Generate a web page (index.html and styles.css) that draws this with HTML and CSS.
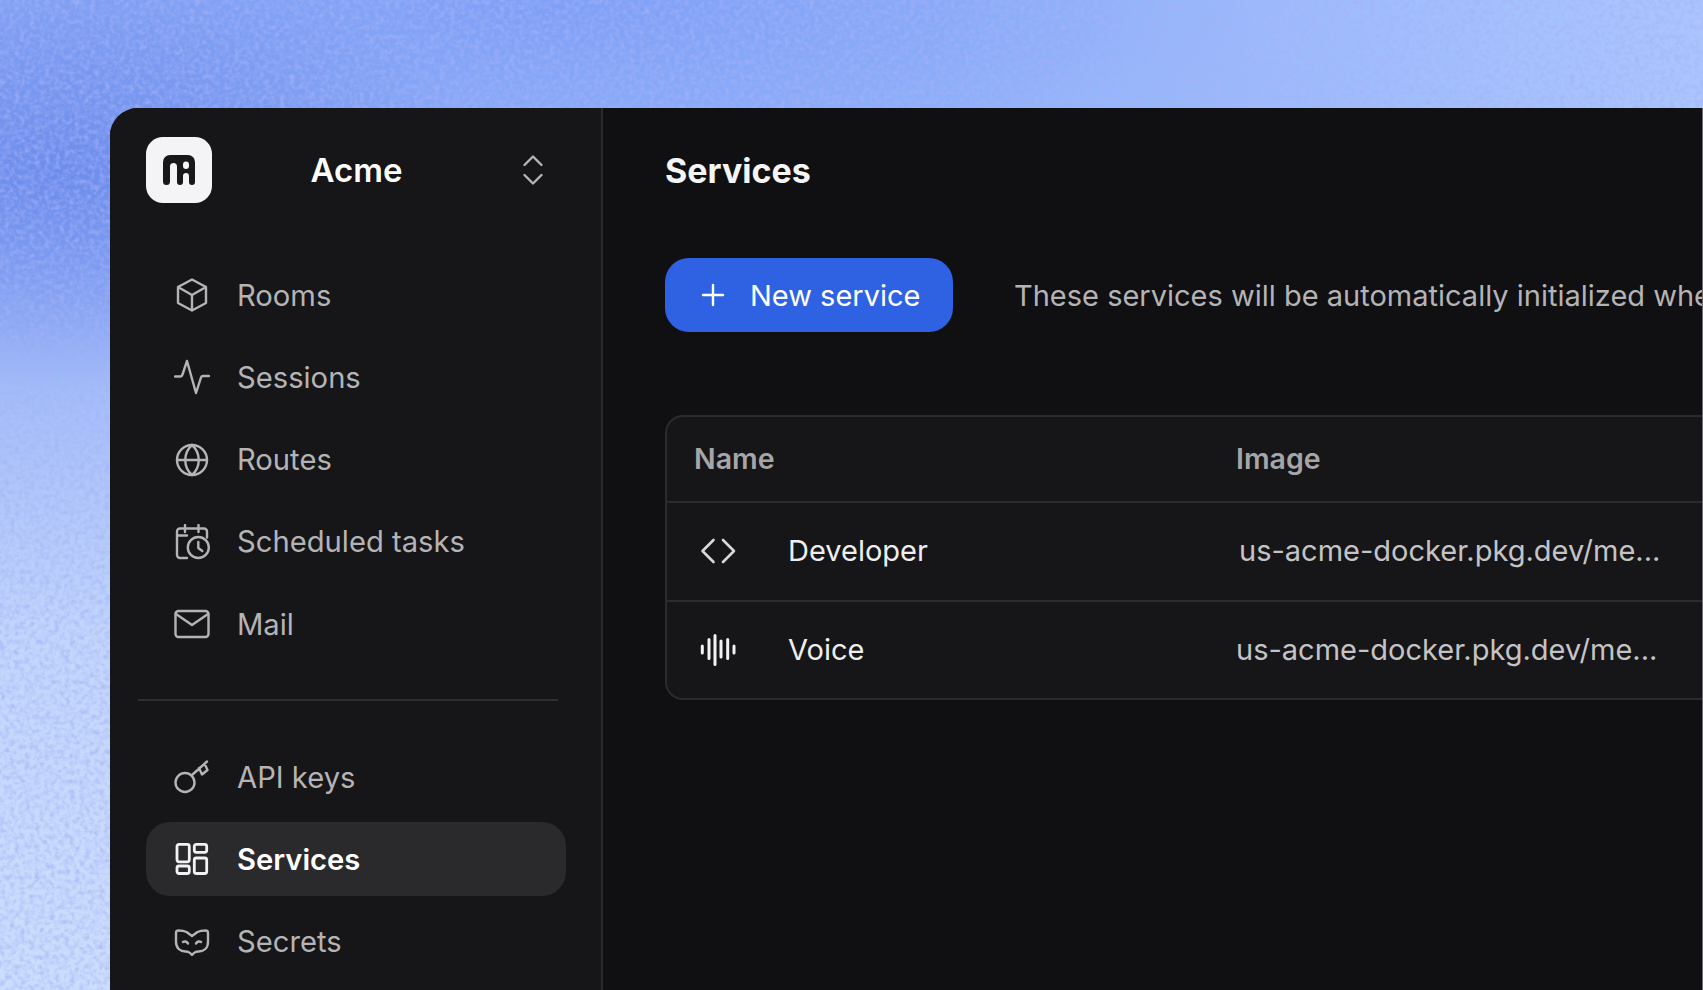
FILE: index.html
```html
<!DOCTYPE html>
<html lang="en">
<head>
<meta charset="utf-8">
<title>Services</title>
<link rel="stylesheet" href="styles.css">
</head>
<body>
<svg class="grain" width="1703" height="990" aria-hidden="true">
  <filter id="n" x="0" y="0" width="100%" height="100%">
    <feTurbulence type="fractalNoise" baseFrequency="0.2" numOctaves="2" seed="4"/>
    <feColorMatrix type="matrix" values="0 0 0 0 0.38  0 0 0 0 0.44  0 0 0 0 0.92  1.05 1.05 0 0 -0.88"/>
  </filter>
  <rect width="1703" height="990" filter="url(#n)"/>
</svg>
<div class="app">
  <aside class="sidebar">
    <header class="brand">
      <div class="logo">
        <svg width="32" height="30" viewBox="0 0 32 30"><path fill="#18181a" d="M0 7a7 7 0 0 1 7-7h18a7 7 0 0 1 7 7v20a3 3 0 0 1-6 0v-6a3 3 0 0 0-6 0v6a3 3 0 0 1-6 0V11.500a3.500 3.500 0 0 0-7 0V26.500a3.500 3.500 0 0 1-7 0z"/><rect x="20" y="6.500" width="6" height="7.500" rx="3" fill="#f4f4f6"/></svg>
      </div>
      <span class="brand-name">Acme</span>
      <svg class="chev" width="24" height="32" viewBox="0 0 24 32" fill="none" stroke="#b4b4b6" stroke-width="2.400" stroke-linecap="round" stroke-linejoin="round"><path d="M3.500 11L12 2.500l8.500 8.500M3.500 21l8.500 8.500 8.500-8.500"/></svg>
    </header>
    <nav class="nav nav-top">
      <a class="item"><svg class="ico" viewBox="0 0 36 36"><path d="M18 2.500l14 7.500v16l-14 7.500-14-7.500v-16zM4 10l14 8 14-8M18 18v15.500"/></svg><span>Rooms</span></a>
      <a class="item"><svg class="ico" viewBox="0 0 36 36"><path d="M1 17.500h5.500c1 0 1.500-.5 2-2L13 2l9 32 5-15.500c.4-1 1-1.500 2-1.500h6"/></svg><span>Sessions</span></a>
      <a class="item"><svg class="ico" viewBox="0 0 36 36"><circle cx="18" cy="18" r="15"/><path d="M3 18h30M18 3c-9 8-9 22 0 30M18 3c9 8 9 22 0 30"/></svg><span>Routes</span></a>
      <a class="item"><svg class="ico" viewBox="0 0 36 36"><path d="M13 34H6a3 3 0 0 1-3-3V7.500a3 3 0 0 1 3-3h24a3 3 0 0 1 3 3v6M3 11.500h10M11 1v7M24.500 1v7"/><circle cx="24.300" cy="23.500" r="10.500"/><path d="M24.300 18v6l4 3"/></svg><span>Scheduled tasks</span></a>
      <a class="item"><svg class="ico" viewBox="0 0 36 36"><rect x="1.500" y="5" width="33" height="26" rx="3"/><path d="M2 8l16 11L34 8"/></svg><span>Mail</span></a>
    </nav>
    <hr class="divider">
    <nav class="nav">
      <a class="item"><svg class="ico" viewBox="0 0 36 36"><circle cx="11" cy="23.500" r="9.500"/><path d="M18 16L33 2.500M25 9l3 6.500 5.500-4.500-3-6.500"/></svg><span>API keys</span></a>
      <a class="item active"><svg class="ico" viewBox="0 0 36 36"><rect x="3" y="3.300" width="12.300" height="17.500" rx="2"/><rect x="20.300" y="3.300" width="12.400" height="8" rx="2"/><rect x="3" y="25" width="12.300" height="7.500" rx="2"/><rect x="20.300" y="17" width="12.400" height="15.500" rx="2"/></svg><span>Services</span></a>
      <a class="item"><svg class="ico" viewBox="0 0 36 36"><path d="M2 9c0-1.500 1-2.500 2.500-2.500 3.500 0 6 .5 8 1.500l5.500 4 5.500-4c2-1 4.500-1.500 8-1.500C33 6.500 34 7.500 34 9v9c0 6-4 9.500-9.500 9.500-2 0-3.500.5-4.500 1.500l-2 2-2-2c-1-1-2.500-1.500-4.500-1.500C6 27.500 2 24 2 18z"/><path d="M9 18c1.500-1 3.500-.8 5 1.500M27 18c-1.500-1-3.500-.8-5 1.500"/></svg><span>Secrets</span></a>
    </nav>
  </aside>
  <main class="main">
    <h1 class="title">Services</h1>
    <div class="toolbar">
      <button class="btn"><svg width="26" height="26" viewBox="0 0 26 26" fill="none" stroke="#fff" stroke-width="2.400" stroke-linecap="round"><path d="M13 3v20M3 13h20"/></svg><span>New service</span></button>
      <p class="hint">These services will be automatically initialized when a room is created in your project</p>
    </div>
    <section class="table">
      <div class="row head"><div class="c-name">Name</div><div class="c-image">Image</div></div>
      <div class="row body-row">
        <div class="c-name cell-name">
          <svg class="rico code" viewBox="0 0 36 36"><path d="M13.500 7L2.500 18l11 11M23 7l11 11-11 11"/></svg>
          <span>Developer</span>
        </div>
        <div class="c-image url shifted">us-acme-docker.pkg.dev/me...</div>
      </div>
      <div class="row body-row last">
        <div class="c-name cell-name">
          <svg class="rico wave" viewBox="0 0 36 36"><path d="M2.300 15v7M9 8.500v19M15 4.500v29M21 10v16M27.700 8.500v19M34 15v7"/></svg>
          <span>Voice</span>
        </div>
        <div class="c-image url">us-acme-docker.pkg.dev/me...</div>
      </div>
    </section>
  </main>
</div>
</body>
</html>
```
FILE: styles.css
```css
* { box-sizing: border-box; }
html, body { margin: 0; height: 100%; }
body {
  width: 1703px;
  height: 990px;
  overflow: hidden;
  position: relative;
  padding: 108px 0 0 110px;
  font-family: Inter, "Noto Sans", sans-serif;
  background:
    radial-gradient(ellipse 420px 220px at 60px 170px, #6c8cec 0%, rgba(108,140,236,0) 100%),
    radial-gradient(ellipse 700px 150px at 550px 10px, rgba(116,150,245,.6) 0%, rgba(116,150,245,0) 100%),
    linear-gradient(180deg, rgba(198,218,252,0) 200px, #c2d6fc 640px, #ccdefd 990px),
    linear-gradient(90deg, #8aa9f6 0%, #90b1fa 55%, #abc6ff 100%);
}
.grain { position: absolute; left: 0; top: 0; }
.app {
  position: relative;
  display: flex;
  width: 1593px;
  height: 882px;
  background: #101012;
  border-top-left-radius: 28px;
  border-right: 1px solid #6e6e72;
  overflow: hidden;
}
.sidebar {
  width: 493px;
  flex: none;
  background: #161618;
  border-right: 2px solid #2b2b2e;
  padding: 29px 36px 0 36px;
}
.brand { display: flex; align-items: center; height: 66px; width: 420px; }
.logo {
  width: 66px; height: 66px; flex: none;
  background: #f4f4f6;
  border-radius: 17px;
  display: flex; align-items: center; justify-content: center;
}
.brand-name { flex: 1; text-align: center; font-size: 33px; font-weight: 600; color: #fff; padding-right: 20px; }
.chev { flex: none; margin-right: 21px; }
.nav { display: flex; flex-direction: column; gap: 8.300px; width: 420px; }
.nav-top { margin-top: 55px; }
.item {
  display: flex; align-items: center; gap: 27px;
  height: 74px; padding-left: 28px;
  font-size: 29.200px; color: #b4b4b6;
  border-radius: 24px;
}
.ico { width: 36px; height: 36px; flex: none; fill: none; stroke: #b4b4b6; stroke-width: 2.400; stroke-linecap: round; stroke-linejoin: round; }
.item.active { background: #2a2a2d; color: #fff; font-weight: 600; }
.active .ico { stroke: #f2f2f4; stroke-width: 2.800; }
.divider { border: 0; height: 2px; background: #2e2e31; margin: 38px 8px 39px -8px; width: 420px; }
.main { flex: 1; padding: 29px 0 0 62px; min-width: 0; }
.title { margin: 0; height: 66px; line-height: 68px; font-size: 34px; font-weight: 700; color: #f5f5f6; }
.toolbar { display: flex; align-items: center; gap: 61px; margin-top: 55px; white-space: nowrap; }
.btn {
  display: flex; align-items: center; gap: 23px;
  width: 288px; height: 74px; flex: none;
  padding: 0 0 0 35px; border: 0; border-radius: 24px;
  background: #2f62e3; color: #fff;
  font: 400 29px Inter, sans-serif;
}
.btn span { margin-left: 1px; }
.hint { margin: 0; font-size: 29px; color: #b4b4b6; }
.table {
  margin-top: 83px;
  width: 1200px;
  background: #161618;
  border: 2px solid #2b2b2e;
  border-radius: 18px;
}
.row { display: flex; align-items: center; padding-bottom: 2px; }
.head { height: 86px; font-size: 28.500px; font-weight: 600; color: #a6a6a8; border-bottom: 2px solid #2b2b2e; }
.body-row { height: 99px; font-size: 29px; color: #eeeeef; border-bottom: 2px solid #2b2b2e; }
.body-row.last { height: 96px; border-bottom: 0; }
.c-name { width: 569px; padding-left: 27px; flex: none; }
.cell-name { display: flex; align-items: center; gap: 52px; padding-left: 33px; }
.rico { width: 36px; height: 36px; flex: none; fill: none; stroke-linecap: round; stroke-linejoin: round; }
.code { stroke: #d8d8da; stroke-width: 2.600; }
.wave { stroke: #f2f2f4; stroke-width: 3; }
.url { color: #c4c4c6; }
.shifted { margin-left: 3px; }
```
